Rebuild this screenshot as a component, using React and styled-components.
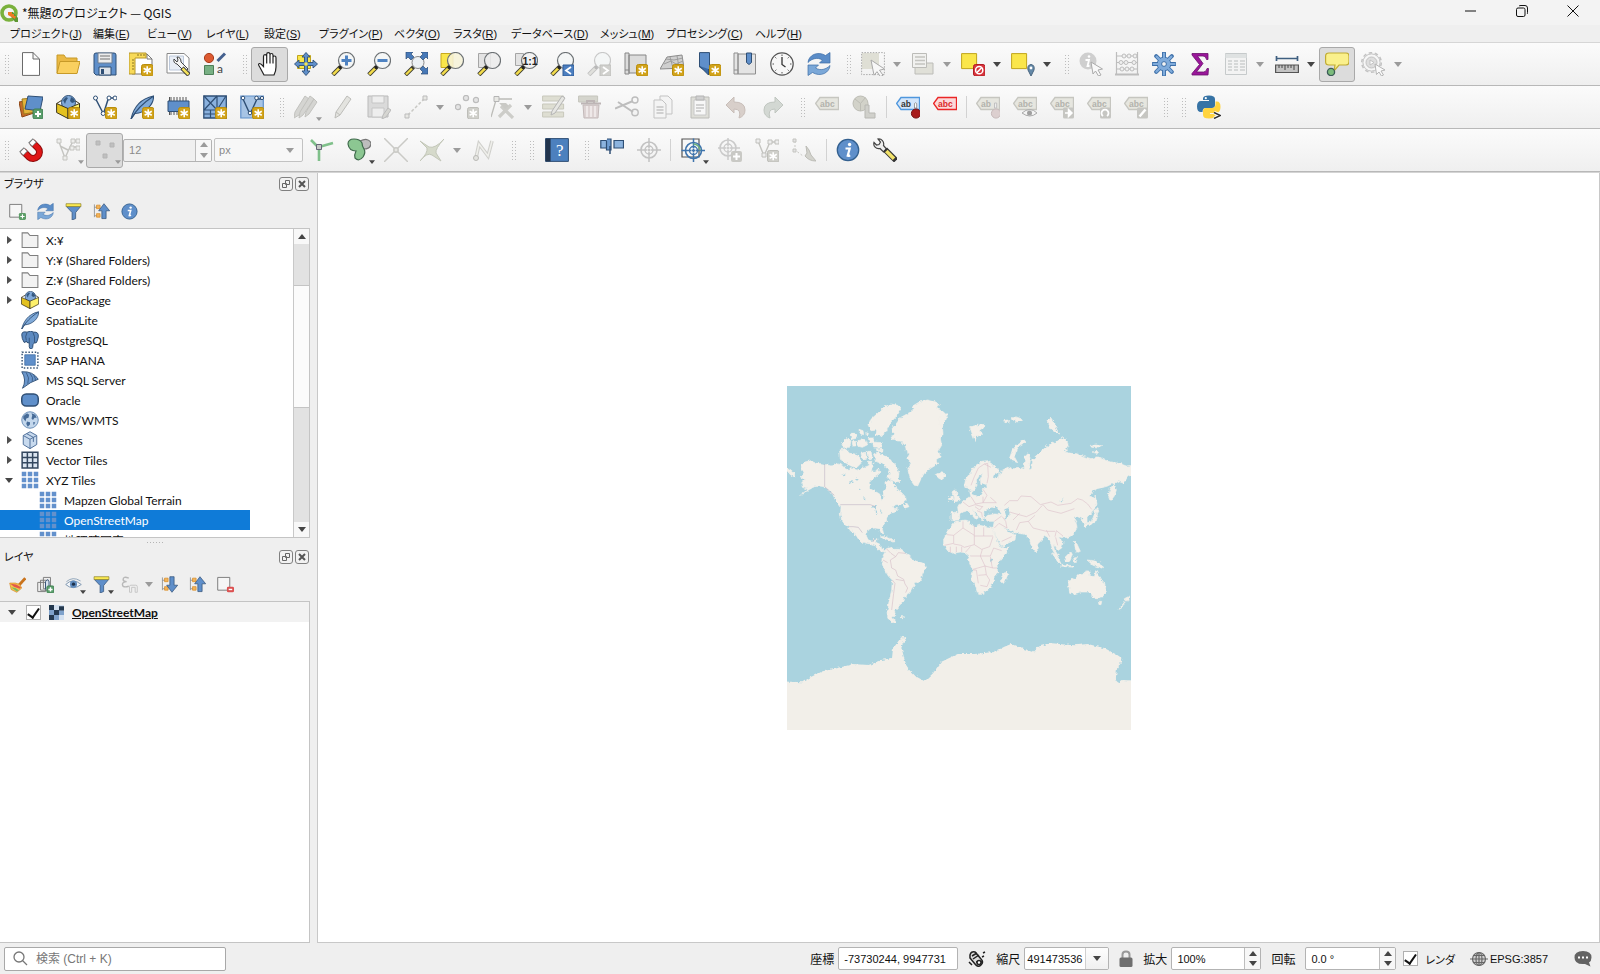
import { useState } from "react";
import styled, { createGlobalStyle } from "styled-components";

const GlobalStyle = createGlobalStyle`
    * {
        box-sizing: border-box;
    }
    body {
        margin: 0;
        overflow: hidden;
        background: #efefef;
        color: #111;
        font-family: Lato, "Noto Sans CJK JP", sans-serif;
        font-size: 12px;
    }
    button, input, select {
        font: inherit;
        color: inherit;
        margin: 0;
    }
`;

/* ---------- shared icon parts ---------- */

const BLUE = "#5f8fca";
const NAVY = "#2f4f75";
const LINE = "#bcbcb8";

const Svg = ({ size = 24, children }) => (
    <svg width={size} height={size} viewBox="0 0 24 24" fill="none" aria-hidden="true">
        {children}
    </svg>
);

const Star = ({ off }) => (
    <g>
        <rect x="12.5" y="12.5" width="11.5" height="11.5" rx="2" fill={off ? "#cfcfca" : "#d2a31a"} stroke={off ? "#bdbdb8" : "#b98d0b"} />
        <path d="M18.2 14.3V22.2M14.6 16.2L21.8 20.3M21.8 16.2L14.6 20.3" stroke="#fff" strokeWidth="1.6" />
    </g>
);

const Plus = () => (
    <g>
        <rect x="14" y="14" width="10" height="10" rx="2" fill="#5a9e6c" stroke="#3f7f50" />
        <path d="M19 16v6M16 19h6" stroke="#fff" strokeWidth="2" />
    </g>
);

const Lens = ({ off, tint = "#f4f6f6" }) => (
    <g>
        <path d="M10 14.5L1.8 22.8" stroke={off ? "#c2c2c2" : "#3c3c30"} strokeWidth="4.4" />
        <path d="M8.4 16.2L2.2 22.4" stroke={off ? "#e0e0dc" : "#f3dc4c"} strokeWidth="2.6" />
        <circle cx="15.5" cy="8.5" r="8" fill={tint} fillOpacity=".88" stroke={off ? "#c8c8c8" : "#6d7275"} strokeWidth="1.2" />
        <circle cx="9" cy="15.4" r="1.6" fill={off ? "#b8b8b8" : "#222"} />
    </g>
);

const Refresh = () => (
    <g stroke="#3d6ea8" strokeWidth=".7">
        <path d="M1 10.500C1.500 3.500 10 -1.500 18.500 3.500L23 .5V11H12.500L15.500 8C10.500 5 5 6.500 1 10.500z" fill="#5b8dc8" />
        <path d="M23 13.500C22.500 20.500 14 25.500 5.500 20.500L1 23.500V13H11.500L8.500 16C13.500 19 19 17.500 23 13.500z" fill="#7ba8d8" />
    </g>
);

const Info = () => (
    <g>
        <circle cx="12" cy="12" r="10.700" fill={BLUE} stroke="#33608f" strokeWidth="1.300" />
        <circle cx="13.600" cy="6.500" r="1.700" fill="#fff" />
        <path d="M9.500 10.500h4.200l-2 7.300q1 .3 2.400-.6" stroke="#fff" strokeWidth="2.200" />
    </g>
);

const Globe = () => (
    <g>
        <circle cx="12" cy="12" r="11" fill="#c3d7ec" stroke="#6b8fb8" strokeWidth="1.300" />
        <path d="M3 7L8 3l3 2-1 4-3 1-1 4-3-4zM14 3l5 2 2 4-3 0-2 3-2-2 1-4zM8 14l4 1 0 3-3 3-2-4zM16 15l3 0-2 4z" fill="#466b98" />
    </g>
);

const GeoBox = () => (
    <g>
        <circle cx="12.500" cy="7.500" r="7" fill="#7fa8d8" stroke={NAVY} />
        <path d="M7 5l3-3 2 1-2 3-1 3zM15 2l3 2 1 3-3 1-2-2z" fill="#35587f" />
        <path d="M.6 8.500L12 13.500V23.500L.6 17.500z" fill="#e3c11f" stroke="#3c3620" />
        <path d="M23.500 8.500L12 13.500V23.500L23.500 17.500z" fill="#fdf06a" stroke="#3c3620" />
        <path d="M.6 8.500L5.500 5.500M23.500 8.500L19.500 6" stroke="#3c3620" />
    </g>
);

const Feather = () => (
    <g>
        <path d="M1 24C3 15 9 4 23.500 1 24 10 15 18 5 18.500z" fill="#7fa9d8" stroke={NAVY} strokeWidth="1.100" />
        <path d="M1 24C6 15 13 8 23 1.500" stroke={NAVY} strokeWidth="1.200" />
    </g>
);

const Funnel = () => (
    <g>
        <path d="M2 5h20l-7 8.500v8.500l-5 2v-10.500z" fill={BLUE} stroke={NAVY} />
        <path d="M1.500 1h21v4h-21z" fill="#fbe94f" stroke="#8d8230" />
    </g>
);

const Tag = ({ fill, stroke, text, label = "abc" }) => (
    <g>
        <path d="M.6 8.500L5 2.500H23.500V14.500H5z" fill={fill} stroke={stroke} strokeWidth="1.300" />
        <text x="5" y="11.500" fontSize="8.500" fontWeight="700" fontFamily="Liberation Sans, sans-serif" fill={text}>{label}</text>
    </g>
);
const GreyTag = ({ label }) => <Tag fill="#e6e6df" stroke="#c6c6c0" text="#b2b2ac" label={label} />;

const Tiles = ({ fill = "#6391cc" }) => (
    <path d="M1 1h6v6H1zM9 1h6v6H9zM17 1h6v6h-6zM1 9h6v6H1zM9 9h6v6H9zM17 9h6v6h-6zM1 17h6v6H1zM9 17h6v6H9zM17 17h6v6h-6z" fill={fill} />
);

const Cross = ({ stroke, center = [12, 12] }) => (
    <g transform={`translate(${center[0]} ${center[1]})`} stroke={stroke}>
        <circle r="8" strokeWidth="1.600" />
        <circle r="4" strokeWidth="1.300" />
        <path d="M-12 0h10M12 0h-10M0-12v10M0 12v-10M-1.500 0h3M0-1.500v3" strokeWidth="1.500" />
    </g>
);

const Wrench = () => (
    <g>
        <path d="M1 4.500C0 8 3 11.500 7 10.500l3.500 3.500 3-3L10.500 7.500C11.500 3.500 8.500.500 5 1l2.500 3L6 6.500 3.500 7z" fill="#eee" stroke="#444" strokeWidth="1.200" />
        <path d="M12 11.500L23 22.500" stroke="#333" strokeWidth="5.600" />
        <path d="M13.300 13L21 20.700" stroke="#f2e26a" strokeWidth="3.600" />
    </g>
);

const UpDown = ({ down }) => (
    <g>
        <path d="M2 2v18M2 6h6M2 18h8" stroke="#8c8c8c" strokeWidth="1.200" />
        <path d="M5 3h5v5H5zM5 15h5v5H5z" fill="#f2b45c" stroke="#d88b22" />
        <path d={down ? "M12.500 1h6v12h5L15.500 23 8 13h4.500z" : "M12.500 22h6V11h5L15.500 1 8 11h4.500z"} fill={BLUE} stroke={NAVY} />
    </g>
);

const icons = {
    newDoc: <path d="M3.500 .6H14L20.500 7V23.400H3.500zM14 .6V7h6.500" fill="#fff" stroke="#6a6a6a" />,
    open: (
        <g stroke="#c79a28">
            <path d="M1 3h7l2 3h11v15H1z" fill="#eab944" />
            <path d="M4 9.500h20l-3 12H1z" fill="#fad05f" />
        </g>
    ),
    save: (
        <g>
            <path d="M1 3Q1 1 3 1H21Q23 1 23 3V23H3L1 21z" fill={BLUE} stroke={NAVY} />
            <path d="M5 1h14v10H5z" fill="#ececec" stroke="#6f7f92" />
            <path d="M7 4h10M7 7h10" stroke="#9a9a9a" strokeWidth="1.300" />
            <path d="M6 15h12v8H6z" fill="#dfe4ea" stroke={NAVY} />
            <path d="M8 17h3v5H8z" fill={NAVY} />
        </g>
    ),
    layout: (
        <g>
            <path d="M3 2H18L23 7V22H3z" fill="#fff" stroke="#777" />
            <path d="M18 2V7h5" stroke="#777" />
            <path d="M0 1H17V6H6V22H0z" fill="#f8da58" stroke="#b6962a" />
            <path d="M3 8h2M3 11h2M3 14h2M3 17h2M9 2v2M12 2v2M15 2v2" stroke="#8b7420" />
            <Star />
        </g>
    ),
    layoutManager: (
        <g>
            <path d="M1 1.500H18L23 6V21H1z" fill="#fff" stroke="#888" />
            <path d="M3.500 4h14v14h-14z" fill="#e9eef6" stroke="#bcc8da" />
            <path d="M8 7q-1 4 3 5l8 8 3-3-7-7q0-5-4-5l1 3-1 2z" fill="#f5f5f5" stroke="#444" />
            <path d="M16 16l7 7" stroke="#333" strokeWidth="4.500" />
            <path d="M16.500 16.500l6 6" stroke="#f2e05c" strokeWidth="2.500" />
        </g>
    ),
    style: (
        <g>
            <circle cx="6" cy="6" r="4.600" fill="#dd5a31" stroke="#a83c1b" />
            <path d="M14.500 9L22 1.500" stroke="#45618f" strokeWidth="3" />
            <path d="M1.500 13.500h9v9h-9z" fill="#78b084" stroke="#4d7f58" />
            <text x="14" y="21" fontSize="12" fontFamily="Lato, sans-serif" fill="#444">a</text>
        </g>
    ),
    pan: <path d="M7 23L3 15.500Q.5 12 2.300 11.500 3.500 11.200 6.500 14.500V4.500Q6.500 2.600 8 2.600T9.700 4.300V10 2.200Q9.700.6 11.300.6T13 2.200V10 3Q13 1.500 14.500 1.500T16 3.200V10.500 5.500Q16 4 17.500 4T19 5.800V15Q19 19 17 23zM9.700 9.500v2M13 9.500v2M16 9.500v2" fill="#fff" stroke="#222" strokeWidth="1.200" />,
    panSel: (
        <g>
            <path d="M3.500 3.500h13v13h-13z" fill="#fae64a" stroke="#c0a51c" />
            <path d="M12 .5L16 5h-2.500v5.500H19V8l4.500 4L19 16v-2.500h-5.500V19H16l-4 4.500L8 19h2.500v-5.500H5V16L.5 12 5 8v2.500h5.500V5H8z" fill={BLUE} stroke={NAVY} strokeWidth=".9" />
            <path d="M10.500 10.500h3v3h-3z" fill="#fae64a" />
        </g>
    ),
    zoomIn: <g><Lens /><path d="M15.500 3.500v10M10.500 8.500h10" stroke="#4f83c2" strokeWidth="3" /></g>,
    zoomOut: <g><Lens /><path d="M10.500 8.500h10" stroke="#4f83c2" strokeWidth="3" /></g>,
    zoomFull: (
        <g>
            <circle cx="14" cy="10.500" r="6" fill="#edf1f4" stroke="#888" />
            <path d="M9.500 15L1.500 23" stroke="#3c3c30" strokeWidth="4" />
            <path d="M8 16.500L2 22.500" stroke="#f3dc4c" strokeWidth="2.300" />
            <path d="M2 0h7L7 2l3 3-3 3-3-3-2 2zM24 0h-7l2 2-3 3 3 3 3-3 2 2zM24 22h-7l2-2-3-3 3-3 3 3 2-2z" fill="#4779b8" stroke={NAVY} strokeWidth=".7" />
        </g>
    ),
    zoomSel: <g><path d="M1 1.500h12v14H1z" fill="#fae64a" stroke="#c7a81e" /><Lens tint="#f6f2d8" /></g>,
    zoomLayer: <g><path d="M1.500 1.500h12v14h-12z" fill="#e3e3e3" stroke="#a5a5a5" /><Lens tint="#ececec" /></g>,
    zoomNative: (
        <g>
            <path d="M1.500 1.500h8v12h-8z" fill="#e3e3e3" stroke="#a5a5a5" />
            <Lens tint="#f1f1f1" />
            <text x="8.500" y="12.500" fontSize="10.500" fontWeight="700" fontFamily="Liberation Sans, sans-serif" fill="#222">1:1</text>
        </g>
    ),
    zoomLast: (
        <g>
            <Lens />
            <path d="M13 13h11v11H13z" fill="#4c7fc0" stroke="#2e5c96" />
            <path d="M21 15l-5 3.500 5 3.500" stroke="#fff" strokeWidth="1.800" />
        </g>
    ),
    zoomNext: (
        <g>
            <Lens off />
            <path d="M13 13h11v11H13z" fill="#d0d0cd" stroke="#c0c0bd" />
            <path d="M16 15l5 3.500-5 3.500" stroke="#fff" strokeWidth="1.800" />
        </g>
    ),
    newMap: (
        <g>
            <path d="M1 1h4v21H1zM5 3h17v18H5z" fill="#dcdcdc" stroke="#868686" />
            <path d="M1 18h4" stroke="#868686" />
            <Star />
        </g>
    ),
    new3d: (
        <g>
            <path d="M7 5L22 3 24 16 0 17z" fill="#cfcfcf" stroke="#8b8b8b" />
            <path d="M4 12l7-3 5 3 7-3M10 5l3 11M17 4l2 11M6 7l8 1 9-2" stroke="#999" strokeWidth=".9" />
            <Star />
        </g>
    ),
    bookmark: (
        <g>
            <path d="M2.500 .6h10v20.500L2.500 15z" fill={BLUE} stroke={NAVY} />
            <path d="M2.500 14l9 9v-6" fill="#3b6ba5" stroke={NAVY} />
            <Star />
        </g>
    ),
    bookmarks: (
        <g>
            <path d="M1 1h4v21H1zM5 2h17.500v20H5z" fill="#e4e4e4" stroke="#8e8e8e" />
            <path d="M1 18h4" stroke="#8e8e8e" />
            <path d="M13.500 1h5v9.500l-2.500 2-2.500-2z" fill={BLUE} stroke={NAVY} />
        </g>
    ),
    clock: (
        <g>
            <circle cx="12" cy="12" r="11.200" fill="#f7f7f7" stroke="#555" strokeWidth="1.200" />
            <path d="M12 5v7.500l3.500 2.500" stroke="#333" strokeWidth="1.300" />
            <path d="M12 2.500v1.500M12 20v1.500M2.500 12H4M20 12h1.500M5.300 5.300l1 1M17.700 17.700l1 1M18.700 5.300l-1 1M5.300 18.700l1-1" stroke="#555" />
        </g>
    ),
    refresh: <Refresh />,
    select: (
        <g>
            <path d="M1 1h17v16H1z" fill="#dfdfd5" />
            <path d="M.6 .6h22.800v22H.6z" stroke="#aaa" strokeDasharray="1.500 1.300" />
            <path d="M10 8l13.500 9-5 1.200 3.500 5-2.500 1.500-3.500-5-3 3.500z" fill="#f7f7f7" stroke="#a9a9a9" />
        </g>
    ),
    selectForm: (
        <g>
            <path d="M4 11h18v11H4z" fill="#e0e0d8" stroke={LINE} />
            <path d="M1.500 1.500h14v14h-14z" fill="#f1f1ef" stroke={LINE} />
            <path d="M4 5h10M4 8.500h10M4 12h10" stroke="#c4c4c0" strokeWidth="1.500" />
        </g>
    ),
    deselect: (
        <g>
            <path d="M.6 1.600h15v15h-15z" fill="#fae64a" stroke="#c0a51c" />
            <rect x="12.500" y="12.500" width="11.500" height="11.500" rx="2" fill="#d9343c" stroke="#b01d25" />
            <circle cx="18.200" cy="18.200" r="3.600" stroke="#fff" strokeWidth="1.500" />
            <path d="M15.800 20.600l4.800-4.800" stroke="#fff" strokeWidth="1.500" />
        </g>
    ),
    selectPin: (
        <g>
            <path d="M.6 1.600h15v15h-15z" fill="#fae64a" stroke="#c0a51c" />
            <path d="M20 24l-3-6q-1-5 3-5.500 4 .5 3 5.500z" fill="#6489a8" stroke="#48657f" />
            <circle cx="20" cy="16" r="1.400" fill="#fff" />
        </g>
    ),
    identify: (
        <g>
            <circle cx="9" cy="9" r="8.500" fill="#cfcfcf" />
            <circle cx="10" cy="4.500" r="1.300" fill="#fff" />
            <path d="M6.500 8h3.500L8.500 14h2" stroke="#fff" strokeWidth="1.800" />
            <path d="M12 10l11.500 7-4.500 1 3 5-2.500 1-3-5-2.500 3z" fill="#f9f9f9" stroke="#aaa" />
        </g>
    ),
    abacus: (
        <g stroke="#bdbdbd">
            <path d="M1.500 0v22M22.500 0v22M1 4h22M1 10.500h22M1 17h22" strokeWidth="1.200" />
            <path d="M0 22.500h24" strokeWidth="2" />
            <g fill="#f0f0f0">
                <circle cx="9" cy="4" r="2" /><circle cx="14" cy="4" r="2" /><circle cx="20" cy="4" r="2" />
                <circle cx="6" cy="10.500" r="2" /><circle cx="11" cy="10.500" r="2" /><circle cx="19" cy="10.500" r="2" />
                <circle cx="7" cy="17" r="2" /><circle cx="12" cy="17" r="2" /><circle cx="17" cy="17" r="2" />
            </g>
        </g>
    ),
    gear: (
        <g>
            <path d="M12 1v22M1 12h22M4.200 4.200l15.600 15.600M19.800 4.200L4.200 19.800" stroke="#3d6fa8" strokeWidth="4" strokeLinecap="round" />
            <circle cx="12" cy="12" r="6.800" fill="#7fabdb" stroke="#3d6fa8" />
            <path d="M12 1.600v21M1.600 12h21M4.600 4.600l15 15M19.400 4.600l-15 15" stroke="#7fabdb" strokeWidth="2.200" strokeLinecap="round" />
            <circle cx="12" cy="12" r="2.400" fill="#f3f3f3" stroke="#3d6fa8" />
        </g>
    ),
    sigma: <path d="M4 1.500H20V7.500H18.500Q18 4 15 4H9.500L15 11.500 8.500 20H15.500Q18.500 20 19 16.500H20.500L20 23H4V21.500L11.500 12.500 4 3z" fill="#9a179a" stroke="#6a0f6c" strokeWidth=".8" />,
    table: (
        <g>
            <path d="M1.500 1.500h21v21h-21z" fill="#f3f3f3" stroke="#c6cacb" />
            <path d="M1.500 2h21v4h-21z" fill="#dfe2e2" />
            <path d="M4 9h4M10 9h4M16 9h5M4 12h4M10 12h4M16 12h5M4 15h4M10 15h4M16 15h5M4 18h4M10 18h4M16 18h5" stroke="#cdd0d0" strokeWidth="1.300" />
        </g>
    ),
    measure: (
        <g>
            <path d="M1.500 6.500h21M1.500 4v5M22.500 4v5" stroke="#3f5f80" strokeWidth="1.700" />
            <path d="M.6 13h22.800v7.500H.6z" fill="#c3c3c3" stroke="#555" strokeWidth="1.200" />
            <path d="M4 13v3M7 13v3M10 13v5M13 13v3M16 13v3M19 13v5" stroke="#444" />
        </g>
    ),
    mapTip: (
        <g>
            <path d="M4 1H21Q24 1 24 4V10Q24 13 21 13H14L9 19 10 13H4Q.6 13 .6 10V4Q.6 1 4 1z" fill="#faf08c" stroke="#c0ab33" strokeWidth="1.200" />
            <circle cx="6" cy="20" r="3.600" fill="#7cbc7c" stroke="#3c5c58" strokeWidth="1.300" />
        </g>
    ),
    runAction: (
        <g stroke="#c2c2c2">
            <circle cx="10.500" cy="10.500" r="9.800" strokeDasharray="3.500 2.650" strokeWidth="1.500" />
            <circle cx="10.500" cy="10.500" r="8.600" fill="#f6f6f6" />
            <circle cx="10.500" cy="10.500" r="5.500" fill="#dedede" />
            <path d="M9 8l4 2.500L9 13z" fill="#fff" />
            <path d="M14 12l10 6-4 1 2.500 4-2 1-2.500-4-2.500 2.500z" fill="#fafafa" stroke="#b5b5b5" />
        </g>
    ),

    dataSource: (
        <g>
            <path d="M0 7L12 5 15 18 3 22z" fill="#c56a28" stroke="#8e4715" />
            <path d="M3 4L15 3 17 17 5 19z" fill="#e5b43a" stroke="#9d7a1d" />
            <path d="M9 1L24 2 21 16 6 14z" fill={BLUE} stroke={NAVY} />
            <Plus />
        </g>
    ),
    newGeo: <g><GeoBox /><Star /></g>,
    newShape: (
        <g>
            <path d="M3 4.500L9.500 17M11 17L15.500 3M16 3h6" stroke={NAVY} strokeWidth="1.500" />
            <g fill="#fff" stroke={NAVY}>
                <circle cx="2.500" cy="3" r="2" /><circle cx="16" cy="3" r="2" /><circle cx="22" cy="3" r="2" /><circle cx="10.200" cy="18.500" r="2" />
            </g>
            <Star />
        </g>
    ),
    newSpatialite: <g><Feather /><Star /></g>,
    newMemory: (
        <g>
            <path d="M5 2v4M8 2v4M11 2v4M14 2v4M17 2v4M20 2v4M5 16v4M8 16v4M11 16v4M3.500 2v4M3.500 16v4" stroke="#555" />
            <path d="M2 6h21v10.500H2z" fill={BLUE} stroke={NAVY} />
            <Star />
        </g>
    ),
    newMesh: (
        <g>
            <path d="M.8 1h22.500v22H.8z" fill="#8ab1de" stroke={NAVY} strokeWidth="1.300" />
            <path d="M1 1l13 14M14 1L1 15M14 1v22M1 15h22M23 1L14 15M7.500 15v8M1 19h13" stroke={NAVY} strokeWidth="1.200" />
            <Star />
        </g>
    ),
    newVirtual: (
        <g>
            <path d="M.8 1h22.500v22H.8z" fill="#a7c4e5" stroke={BLUE} strokeWidth="1.200" />
            <path d="M3 4l6 13h2L17 4h5" stroke={NAVY} strokeWidth="1.400" />
            <g fill="#fff" stroke={NAVY}><circle cx="3" cy="3" r="1.800" /><circle cx="16.500" cy="3" r="1.800" /><circle cx="22" cy="3" r="1.600" /><circle cx="10" cy="18" r="1.800" /></g>
            <Star />
        </g>
    ),
    multiEdit: (
        <g fill="#d5d5d2" stroke="#c2c2be">
            <path d="M0 23l1-6L11 1l4 3L5 20z" /><path d="M5 23l1-6L16 1l4 3L9 20z" /><path d="M11 22l1-5L20 4l3 3-8 12z" />
        </g>
    ),
    pencil: <path d="M4 23l1-6L16 1l4 3L9 20zM5 17l4 3" fill="#e3e3df" stroke="#bdbdb9" />,
    saveEdit: (
        <g>
            <path d="M1 1h20v21H1z" fill="#dadada" stroke="#bababa" /><path d="M5 1h12v7H5zM5 13h12v9H5z" fill="#eee" stroke="#c6c6c6" />
            <path d="M15 24l1-4 5-7 3 2-5 7z" fill="#d6d6d2" stroke="#bbb" />
        </g>
    ),
    addLine: (
        <g>
            <path d="M4 20L20 4" stroke="#c8c8c4" strokeWidth="1.500" strokeDasharray="3 2" />
            <path d="M1 19h4v4H1zM19 1h4v4h-4z" fill="#e8e8e4" stroke="#bbb" />
        </g>
    ),
    addPoints: (
        <g>
            <g fill="#e4e4e4" stroke="#bcbcbc" strokeWidth="1.200"><circle cx="11" cy="3" r="2.600" /><circle cx="21" cy="5" r="2.600" /><circle cx="3" cy="12" r="2.600" /></g>
            <Star off />
        </g>
    ),
    vertexTool: (
        <g>
            <path d="M5 5L0 22M7 4h14" stroke="#bcbcb8" strokeWidth="1.300" /><path d="M3 1.500h5v5H3z" fill="#e8e8e4" stroke="#b5b5b5" />
            <path d="M10 11l12 12M20 10L8 22" stroke="#cdcdc9" strokeWidth="3.200" /><path d="M8 8h7l3 3-4 3z" fill="#c9c9c5" />
        </g>
    ),
    attributes: (
        <g>
            <path d="M.6 1h21v5h-21zM.6 9h21v5h-21zM.6 17h21v5h-21z" fill="#deded2" stroke="#c8c8bc" />
            <path d="M9 20l1-4L20 1l3 2L13 18z" fill="#e6e6e2" stroke="#b5b5b5" />
        </g>
    ),
    trash: (
        <g>
            <path d="M.6 1h19v6h-19z" fill="#d5d5cd" stroke="#c5c5bd" /><path d="M3 8.500h20M9 8V6h7v2" stroke="#bdb5b5" strokeWidth="2" />
            <path d="M5 10h16l-1 13H6z" fill="#ddd3d3" stroke="#c3b9b9" /><path d="M9 11v11M13 11v11M17 11v11" stroke="#f4f0f0" strokeWidth="1.500" />
        </g>
    ),
    cut: (
        <g stroke="#bdbdbd">
            <path d="M0 13.500L18 6M3 7l15 10" strokeWidth="2" /><circle cx="20" cy="5" r="3" strokeWidth="1.400" /><circle cx="20" cy="17.500" r="3.200" strokeWidth="1.400" />
        </g>
    ),
    copy: (
        <g fill="#f4f4f4" stroke="#c3c3c3">
            <path d="M9 1h8l4 4v14H9z" /><path d="M3 5h8l4 4v14H3z" /><path d="M5.500 12h7M5.500 15h7M5.500 18h7" strokeWidth="1.500" />
        </g>
    ),
    paste: (
        <g>
            <path d="M3 2h18v21H3z" fill="#deded8" stroke="#bcbcb8" /><path d="M6 5h12v15H6z" fill="#f7f7f7" stroke="#c8c8c8" />
            <path d="M8 1h8v4H8z" fill="#d0d0d0" stroke="#b4b4b4" /><path d="M8 10h8M8 13h8M8 16h5" stroke="#c6c6c6" strokeWidth="1.300" />
        </g>
    ),
    undo: <path d="M2 10L10 2v5q11 0 11 8 0 6-6 8 3-9-5-9v4z" fill="#d8cfca" stroke="#c8beb9" />,
    redo: <path d="M22 10L14 2v5Q3 7 3 15q0 6 6 8-3-9 5-9v4z" fill="#d3d8d3" stroke="#c0c6c0" />,
    label: <GreyTag />,
    diagram: (
        <g>
            <circle cx="8.500" cy="8.500" r="7.500" fill="#d2d2c9" stroke="#bdbdb5" /><path d="M8.500 8.500l5-6M8.500 8.500L3 4M8.500 8.500V16" stroke="#bdbdb5" />
            <path d="M13 23V10h4v4h0v4h6v5z" fill="#d0d0cb" stroke="#b8b8b3" />
        </g>
    ),
    pinLabel: (
        <g>
            <Tag fill="#d4e6fa" stroke="#4f97dd" text="#333" label="ab" />
            <circle cx="20" cy="18.500" r="4.600" fill="#a81c1c" stroke="#731010" /><path d="M18.500 13V8.500q1-1.500 2.200 0v4.500z" fill="#fff" stroke="#777" strokeWidth=".7" />
        </g>
    ),
    redLabel: <Tag fill="#fbd9d9" stroke="#ea2626" text="#dc2a2a" />,
    pinOff: <g><GreyTag label="ab" /><circle cx="20" cy="18.500" r="4.600" fill="#dccfcf" stroke="#c6b9b9" /><path d="M18.500 13V8h2.200v5z" fill="#eee" stroke="#c0c0c0" /></g>,
    showLabel: <g><GreyTag /><path d="M9 18q8-7 15 0-7 6-15 0z" fill="#f4f4f4" stroke="#aaa" /><circle cx="16.500" cy="18" r="2.500" fill="#a0a0a0" /></g>,
    moveLabel: <g><GreyTag /><rect x="13" y="12.500" width="11" height="11" rx="1.500" fill="#c6c6c2" /><path d="M15 18h4M18.500 14.500l3.500 3.500-3.500 3.500z" stroke="#fff" strokeWidth="1.500" fill="#fff" /></g>,
    rotateLabel: <g><GreyTag /><rect x="13" y="12.500" width="11" height="11" rx="1.500" fill="#c6c6c2" /><path d="M16 21a3.500 3.500 0 1 1 4 0" stroke="#fff" strokeWidth="1.800" /></g>,
    editLabel: <g><GreyTag /><rect x="13" y="12.500" width="11" height="11" rx="1.500" fill="#c6c6c2" /><path d="M15.500 21.500l6-7" stroke="#fff" strokeWidth="2.500" /></g>,
    python: (
        <g>
            <path d="M12 .5q6 0 6 3.500v6q0 3-3 3H9q-3.500 0-3.500 4H4q-4 0-4-5.500T4 6h8V5H6V3.500Q6 .5 12 .5z" fill="#3673a5" /><circle cx="8.800" cy="3.200" r="1.100" fill="#fff" />
            <path d="M12 23.500q-6 0-6-3.500v-4q0-3 3-3h6q3.500 0 3.500-4V6.500H20q3.500 0 3.500 5.500 0 5-3.500 6h-7v1h5.500v1.500q0 3-6.500 3z" fill="#ffd43f" />
            <path d="M17 17.500l6.500 3-6.500 3" stroke="#fff" strokeWidth="3.500" /><path d="M17 17.500l6.500 3-6.500 3" stroke="#333" strokeWidth="1.500" />
        </g>
    ),

    magnet: (
        <g>
            <path d="M12 3L18 9A6.400 6.400 0 0 1 9 18L3 12" stroke="#8f0d0d" strokeWidth="7" transform="translate(1 1)" />
            <path d="M13 4L19 10A6.400 6.400 0 0 1 10 19L4 13" stroke="#df1616" strokeWidth="5" />
            <path d="M11.500 2.500L15.500 6.500M2.500 11.500L6.500 15.500" stroke="#777" strokeWidth="6.600" />
            <path d="M12.300 3.300L15 6M3.300 12.300L6 15" stroke="#fff" strokeWidth="4.800" />
        </g>
    ),
    snapAll: (
        <g stroke="#c4c4c0" fill="#ededeb"><path d="M3 4l6 16L14 9M14 9L17 3h6M14 9h8M4 8l8 4" strokeWidth="1.400" fill="none" /><path d="M1 1h4v4H1zM15 1h4v4h-4zM20 1h4v4h-4zM14 8h4v4h-4zM20 8h4v4h-4zM7 18h4v4H7z" /></g>
    ),
    snapPoints: <path d="M3 3h4v4H3zM17 5h4v4h-4zM10 16h4v4h-4z" fill="#bfbfbf" stroke="#b4b4b4" />,
    topology: (
        <g>
            <path d="M1 2l7 7M9 23V9L23 5" stroke="#7fc08a" strokeWidth="2.600" /><path d="M6.500 6.500h5v5h-5z" fill="#c4c8c4" stroke="#667" />
        </g>
    ),
    avoid: (
        <g strokeWidth="1.200">
            <path d="M13 3q8-4 11 2 0 6-7 6l-5-3z" fill="#bdbdbd" stroke="#777" />
            <path d="M1 6Q1 1 7 1t8 4q0 3 2 6t-1 8q-4 5-8 1-1-3 1-7-7 0-8-7z" fill="#8cc792" stroke="#3f6a4c" />
        </g>
    ),
    snapCross: <g stroke="#cacac6" strokeWidth="1.500"><path d="M0 0l24 24M24 0L0 24" /><circle cx="12" cy="12" r="2.200" fill="#e6e6e2" /></g>,
    tracing: <path d="M0 3l9 6q6 2 15-8-9 10-8 14l5 8-9-6Q7 14 0 23q8-8 7-13z" fill="#d6dacb" stroke="#c3c7b9" />,
    digitize: (
        <g><path d="M4 20L7 6l9 12L20 3" stroke="#cfcfcb" strokeWidth="3.600" /><path d="M4 20L7 6l9 12L20 3" stroke="#efefeb" strokeWidth="1.500" /><circle cx="4" cy="20" r="2.500" fill="#e4e4e0" stroke="#b9b9b5" /></g>
    ),
    help: (
        <g>
            <path d="M.6 .6h22.800v22.800H.6z" fill="#4c80be" stroke={NAVY} /><path d="M.6 .6h5v22.800h-5z" fill="#22344d" />
            <text x="11" y="18" fontSize="17" fontFamily="Liberation Serif, serif" fill="#fff">?</text>
        </g>
    ),
    copyright: (
        <g>
            <path d="M.8 2.500h7.500v7.500H.8zM14 2.500h9.500v7.500H14z" fill="#8db4df" stroke={NAVY} strokeWidth="1.200" />
            <path d="M7 1h4v11H6.500V3" fill="#6f9dd2" stroke={NAVY} strokeWidth="1.200" /><path d="M10 8v8" stroke={NAVY} strokeWidth="1.500" />
        </g>
    ),
    target: <Cross stroke="#c2c2c2" />,
    targetMap: (
        <g><path d="M1 1h17v18H1z" fill="#f7f7f7" stroke="#555" strokeWidth="1.200" /><Cross stroke="#3f74ad" center={[12.5, 12.5]} /><path d="M12.500 6A6.500 6.500 0 0 1 19 12.500" stroke="#6fb27d" strokeWidth="1.400" /></g>
    ),
    targetAdd: <g><Cross stroke="#cacaca" center={[10, 10]} /><rect x="13" y="13" width="11" height="11" rx="2" fill="#c9c9c5" /><path d="M18.500 15v7M15 18.500h7" stroke="#fff" strokeWidth="2" /></g>,
    vertexAdd: (
        <g><path d="M3 3l6 15L15 4h8" stroke="#c4c4c0" strokeWidth="1.400" /><path d="M1 1h4v4H1zM13 2h4v4h-4zM20 2h4v4h-4zM7 15h4v4H7z" fill="#eee" stroke="#c0c0bc" /><Star off /></g>
    ),
    brushSel: (
        <g><path d="M3 3v9l8 6" stroke="#c9c9c5" strokeDasharray="2 2" /><path d="M1 1h3v3H1zM1 11h3v3H1z" fill="#e3e3e3" stroke="#c4c4c0" /><path d="M14 8l3 4 2 5 5 6q-7 0-11-5l2-3z" fill="#d2d2cc" stroke="#bcbcb6" /></g>
    ),
    info: <Info />,
    wrench: <Wrench />,

    addLayer: <g><path d="M1 2h17v18H1z" fill="#f6f6f6" stroke="#777" strokeWidth="1.300" /><rect x="14" y="14" width="10" height="10" rx="2" fill="#5d9e68" /><path d="M19 16v6M16 19h6" stroke="#fff" strokeWidth="1.600" /></g>,
    refreshSmall: <Refresh />,
    funnel: <Funnel />,
    collapse: <UpDown />,
    expand: <UpDown down />,
    brush: (
        <g><path d="M23 3L14 13" stroke="#c9731c" strokeWidth="4" /><path d="M1 10l8 0 6 2 3 5-7 6L3 19z" fill="#f6c64a" stroke="#d9892b" /><path d="M2 11l8 1 7 4-2 2-8-3z" fill="#e2574b" /><path d="M3 16l6 1 5 3-3 2z" fill="#7ab864" /></g>
    ),
    addGroup: <g fill="#eee" stroke="#777" strokeWidth="1.300"><path d="M1 9h11v13H1zM5 6h11v14H5zM9 2h10v16H9z" /><path d="M12 19V8l3-3 2 3v11" fill="#d8e2ee" stroke={NAVY} /><Plus /></g>,
    eye: <g><path d="M1 12Q11 2 23 12 11 21 1 12z" fill="#f4f7fa" stroke="#7892ad" strokeWidth="1.300" /><circle cx="12" cy="11.500" r="5" fill="#5e8abd" /><circle cx="12" cy="11.500" r="2.300" fill="#1d3049" /><path d="M2 8Q11 0 22 7" stroke="#8ba2b8" strokeWidth="1.300" /></g>,
    expression: <g><path d="M11 3Q3 0 3 5 3 8 8 8 2 8.500 2 12 2 17 11 14.500" stroke="#b8b8b8" strokeWidth="2" /><path d="M12 23v-8q0-2 2-2h7q2 0 2 2v8h-3v-7h-5v7z" fill="#f0f0f0" stroke="#c4c4c4" strokeWidth="1.300" /></g>,
    removeLayer: <g><path d="M1 2h17v18H1z" fill="#f6f6f6" stroke="#777" strokeWidth="1.300" /><rect x="14" y="15" width="10" height="8" rx="2" fill="#dc5050" /><path d="M16.500 19h5" stroke="#fff" strokeWidth="2" /></g>,

    folder: <path d="M1.500 2.500H9l3 3.500h10.500v16h-21z" fill="#f2f2f2" stroke="#7e7e7e" strokeWidth="1.400" />,
    geopackage: <GeoBox />,
    feather: <Feather />,
    elephant: (
        <g><path d="M1 5Q1 0 8 1.500 13-1 17 1.500 24 1 23 8 22 14 20 16q-2 0-2-2 0 3-2 4 0 5-2 6-3 0-3-3v-5q-4 0-4-3-1 3-3 2Q1 10 1 5z" fill="#5d8ac0" stroke={NAVY} strokeWidth="1.300" /><path d="M8 2q-3 6-1 10M16 2q3 5 2 12M11 16V9" stroke={NAVY} strokeWidth="1.100" /></g>
    ),
    hana: <g><path d="M5 5h14v14H5z" fill={BLUE} stroke="#3f6ca3" /><path d="M1.500 1.500h21v21h-21z" stroke="#3b5878" strokeWidth="2" strokeDasharray="2 2.200" /></g>,
    mssql: <g><path d="M1 1q15-1 22 10Q13 14 2 23 8 12 1 1z" fill="#6b97cc" stroke={NAVY} strokeWidth="1.200" /><path d="M7 2q5 7 2 15M12 3q5 6 3 11M17 6q3 4 2 7" stroke={NAVY} /></g>,
    oracle: <rect x="1" y="4" width="22" height="16" rx="6" fill={BLUE} stroke={NAVY} strokeWidth="2" />,
    globe: <Globe />,
    cube: <g fill="#c8daee" stroke="#50709a" strokeWidth="1.300"><path d="M12 1l9 5v12l-9 5.500L3 18V6z" /><path d="M3 6l9 5 9-5M12 11v12.500M7.500 3.500L16.500 8.500v6" /></g>,
    vectorTiles: <g><path d="M1.500 1.500h21v21h-21z" fill="#dce6f1" /><path d="M1.500 1.500h21v21h-21zM8.500 1v22M15.500 1v22M1 8.500h22M1 15.500h22" stroke="#33475e" strokeWidth="2" /></g>,
    tiles: <Tiles />,
    raster: (
        <g><path d="M0 0h24v24H0z" fill="#d4e1f0" /><path d="M0 0h8v8H0zM16 2h8v7h-8zM8 8h8v8H8zM0 16h8v8H0z" fill="#24394f" /><path d="M16 9h8v7h-8zM0 8h8v8H0zM8 16h8v8H8z" fill="#7fa2cb" /></g>
    ),
};

/* ---------- title bar and menu ---------- */

const menus = [
    ["プロジェクト", "J", 83], ["編集", "E", 54], ["ビュー", "V", 59], ["レイヤ", "L", 58],
    ["設定", "S", 55], ["プラグイン", "P", 75], ["ベクタ", "O", 59], ["ラスタ", "R", 58],
    ["データベース", "D", 89], ["メッシュ", "M", 66], ["プロセシング", "C", 89], ["ヘルプ", "H", 60],
];

const TitleBar = () => (
    <STitleBar>
        <svg width="18" height="18" viewBox="0 0 18 18" aria-hidden="true">
            <circle cx="9" cy="9" r="7" fill="none" stroke="#7ab13c" strokeWidth="3.600" />
            <path d="M8 8h5l5 6v4h-3z" fill="#5d9632" />
            <path d="M8 8h4v2h2v2h2l-1 3-7-4z" fill="#ee7b23" />
        </svg>
        <STitle>*無題のプロジェクト — QGIS</STitle>
        <SWindowButton aria-label="最小化">
            <svg width="12" height="12"><path d="M0 6h11" stroke="#111" /></svg>
        </SWindowButton>
        <SWindowButton aria-label="元に戻す">
            <svg width="12" height="12" fill="none" stroke="#111"><rect x=".5" y="3" width="8.500" height="8.500" rx="1.500" /><path d="M3 1Q3.500.5 5 .5H9Q11.500.5 11.500 3V7.500Q11.500 9 11 9" /></svg>
        </SWindowButton>
        <SWindowButton aria-label="閉じる">
            <svg width="12" height="12"><path d="M.5.5l11 11M11.500.5l-11 11" stroke="#111" /></svg>
        </SWindowButton>
    </STitleBar>
);

/* ---------- toolbars ---------- */

const Arrow = ({ up, off, small }) => (
    <svg width={small ? 6 : 8} height={small ? 4 : 5} viewBox="0 0 8 5" aria-hidden="true">
        <path d={up ? "M0 5L4 0l4 5z" : "M0 0h8L4 5z"} fill={off ? "#9b9b9b" : "#454545"} />
    </svg>
);

const Tool = ({ name, menu, corner, pressed, off }) => (
    <>
        <SToolButton aria-label={name} disabled={off} $pressed={pressed}>
            <Svg>{icons[name]}</Svg>
            {corner && <SCorner><Arrow small off={off} /></SCorner>}
        </SToolButton>
        {menu && <SMenuArrow aria-label={`${name} menu`}><Arrow off={off} /></SMenuArrow>}
    </>
);

const ToolBar = ({ width, children }) => (
    <SToolBar>
        <SHandle><SDots /></SHandle>
        <STools $width={width}>{children}</STools>
    </SToolBar>
);

const tool = (name, rest) => <Tool key={name} name={name} {...rest} />;
const off = { off: true };

const Spin = ({ id, label, value, grey, width }) => (
    <SField $width={width} $grey={grey}>
        <input id={id} aria-label={label} defaultValue={value} />
        <SSpinButtons>
            <button aria-label="増やす"><Arrow up off={grey} /></button>
            <button aria-label="減らす"><Arrow off={grey} /></button>
        </SSpinButtons>
    </SField>
);

const ToolRows = () => (
    <>
        <SToolRow>
            <ToolBar width={220}>
                {["newDoc", "open", "save", "layout", "layoutManager", "style"].map((n) => tool(n))}
            </ToolBar>
            <ToolBar width={586}>
                {tool("pan", { pressed: true })}
                {["panSel", "zoomIn", "zoomOut", "zoomFull", "zoomSel", "zoomLayer", "zoomNative", "zoomLast"].map((n) => tool(n))}
                {tool("zoomNext", off)}
                {["newMap", "new3d", "bookmark", "bookmarks", "clock", "refresh"].map((n) => tool(n))}
            </ToolBar>
            <ToolBar width={200}>
                {tool("select", { menu: true, off: true })}
                {tool("selectForm", { menu: true, off: true })}
                {tool("deselect", { menu: true })}
                {tool("selectPin", { menu: true })}
            </ToolBar>
            <ToolBar width={333}>
                {tool("identify", off)}
                {tool("abacus", off)}
                {tool("gear")}
                {tool("sigma")}
                {tool("table", { menu: true, off: true })}
                {tool("measure", { menu: true })}
                {tool("mapTip", { pressed: true })}
                {tool("runAction", { menu: true, off: true })}
            </ToolBar>
        </SToolRow>
        <SToolRow>
            <ToolBar width={257}>
                {["dataSource", "newGeo", "newShape", "newSpatialite", "newMemory", "newMesh", "newVirtual"].map((n) => tool(n))}
            </ToolBar>
            <ToolBar width={503}>
                {tool("multiEdit", { corner: true, off: true })}
                {tool("pencil", off)}
                {tool("saveEdit", off)}
                {tool("addLine", { menu: true, off: true })}
                {tool("addPoints", off)}
                {tool("vertexTool", { menu: true, off: true })}
                {["attributes", "trash", "cut", "copy", "paste", "undo", "redo"].map((n) => tool(n, off))}
            </ToolBar>
            <ToolBar width={345}>
                {tool("label", off)}
                {tool("diagram", off)}
                <SSeparator />
                {tool("pinLabel")}
                {tool("redLabel")}
                <SSeparator />
                {["pinOff", "showLabel", "moveLabel", "rotateLabel", "editLabel"].map((n) => tool(n, off))}
            </ToolBar>
            <ToolBar width={0} />
            <ToolBar width={37}>{tool("python")}</ToolBar>
        </SToolRow>
        <SToolRow>
            <ToolBar width={489}>
                {tool("magnet")}
                {tool("snapAll", { corner: true, off: true })}
                {tool("snapPoints", { corner: true, off: true, pressed: true })}
                <Spin label="許容範囲" value="12" grey width={89} />
                <SComboBox>
                    <select aria-label="単位" defaultValue="px"><option>px</option></select>
                    <Arrow off />
                </SComboBox>
                {tool("topology")}
                {tool("avoid", { corner: true })}
                {tool("snapCross", off)}
                {tool("tracing", { menu: true, off: true })}
                {tool("digitize", off)}
            </ToolBar>
            <ToolBar width={0} />
            <ToolBar width={37}>{tool("help")}</ToolBar>
            <ToolBar width={311}>
                {tool("copyright")}
                {tool("target", off)}
                <SSeparator />
                {tool("targetMap", { corner: true })}
                {tool("targetAdd", off)}
                {tool("vertexAdd", off)}
                {tool("brushSel", off)}
                <SSeparator />
                {tool("info")}
                {tool("wrench")}
            </ToolBar>
        </SToolRow>
    </>
);

/* ---------- side panels ---------- */

const sources = [
    ["folder", "X:¥", "closed"],
    ["folder", "Y:¥ (Shared Folders)", "closed"],
    ["folder", "Z:¥ (Shared Folders)", "closed"],
    ["geopackage", "GeoPackage", "closed"],
    ["feather", "SpatiaLite"],
    ["elephant", "PostgreSQL"],
    ["hana", "SAP HANA"],
    ["mssql", "MS SQL Server"],
    ["oracle", "Oracle"],
    ["globe", "WMS/WMTS"],
    ["cube", "Scenes", "closed"],
    ["vectorTiles", "Vector Tiles", "closed"],
    ["tiles", "XYZ Tiles", "open"],
    ["tiles", "Mapzen Global Terrain", "child"],
    ["tiles", "OpenStreetMap", "child"],
    ["tiles", "地理院写真", "child"],
];

const Expander = ({ state }) => (
    <SExpander>
        {state === "closed" && <svg width="5" height="8"><path d="M0 0l5 4-5 4z" fill="#505050" /></svg>}
        {state === "open" && <Arrow />}
    </SExpander>
);

const PanelHeader = ({ title }) => (
    <SPanelHeader>
        <SPanelTitle>{title}</SPanelTitle>
        <SPanelButton aria-label={`${title} フロート`}>
            <svg width="8" height="8" fill="none" stroke="#666"><path d="M3.500.5h4v4h-4zM.5 3.500h4v4h-4z" /></svg>
        </SPanelButton>
        <SPanelButton aria-label={`${title} 閉じる`}>
            <svg width="8" height="8"><path d="M1 1l6 6M7 1L1 7" stroke="#555" strokeWidth="2" /></svg>
        </SPanelButton>
    </SPanelHeader>
);

const SmallTool = ({ name, corner }) => (
    <SSmallButton aria-label={name}>
        <Svg size={17}>{icons[name]}</Svg>
        {corner && <SCorner><Arrow small /></SCorner>}
    </SSmallButton>
);

const BrowserPanel = () => {
    const [selected, setSelected] = useState("OpenStreetMap");
    return (
        <SBrowserPanel>
            <PanelHeader title="ブラウザ" />
            <SPanelTools>
                {["addLayer", "refreshSmall", "funnel", "collapse", "info"].map((n) => <SmallTool key={n} name={n} />)}
            </SPanelTools>
            <STreeBox>
                <STree>
                    {sources.map(([icon, label, state]) => (
                        <STreeRow key={label} $child={state === "child"} $selected={label === selected} onClick={() => setSelected(label)}>
                            <Expander state={state} />
                            <Svg size={18}>{icons[icon]}</Svg>
                            <span>{label}</span>
                        </STreeRow>
                    ))}
                </STree>
                <SScrollBar>
                    <SScrollButton aria-label="上へ"><Arrow up /></SScrollButton>
                    <SScrollThumb />
                    <SScrollButton aria-label="下へ"><Arrow /></SScrollButton>
                </SScrollBar>
            </STreeBox>
        </SBrowserPanel>
    );
};

const LayerPanel = () => (
    <SLayerPanel>
        <PanelHeader title="レイヤ" />
        <SPanelTools>
            <SmallTool name="brush" />
            <SmallTool name="addGroup" />
            <SmallTool name="eye" corner />
            <SmallTool name="funnel" corner />
            <SmallTool name="expression" />
            <SSmallArrow aria-label="式フィルタ"><Arrow off /></SSmallArrow>
            <SmallTool name="expand" />
            <SmallTool name="collapse" />
            <SmallTool name="removeLayer" />
        </SPanelTools>
        <SLayerBox>
            <SLayerRow>
                <Arrow />
                <SCheck type="checkbox" id="layer-osm" defaultChecked />
                <Svg size={15}>{icons.raster}</Svg>
                <label htmlFor="layer-osm">OpenStreetMap</label>
            </SLayerRow>
        </SLayerBox>
    </SLayerPanel>
);

/* ---------- map ---------- */

const WorldMap = () => (
    <SMap viewBox="0 0 1032 1032" role="img" aria-label="OpenStreetMap">
        <defs>
            <filter id="coast" x="0" y="0" width="100%" height="100%">
                <feTurbulence type="fractalNoise" baseFrequency=".1" numOctaves="2" seed="4" />
                <feDisplacementMap in="SourceGraphic" scale="12" xChannelSelector="R" yChannelSelector="G" />
            </filter>
        </defs>
        <path d="M0 0h1032v1032H0z" fill="#aad3df" />
        <g filter="url(#coast)">
            <path d="M-10-10h1052v1052H-10z" fill="#aad3df" />
            {/* the Americas */}
            <g transform="translate(-18 -18)" fill="#f3f0ea" stroke="#f3f0ea" strokeWidth="2">
                <path d="M60 262L72 246 88 242 105 250 130 252 150 258 165 250 180 254 195 268 215 266 235 272 245 262 262 258 270 248 276 262 270 272 282 274 292 266 300 276 290 286 276 296 264 308 266 326 282 334 296 342 302 362 308 352 306 336 314 324 312 306 322 300 336 308 344 322 352 330 362 338 374 352 376 364 362 372 344 374 332 384 350 386 342 396 326 402 318 412 316 424 306 436 304 446 308 462 300 458 296 446 282 444 268 446 258 452 256 468 262 480 274 484 278 478 288 476 286 488 296 492 298 504 306 508 316 510 306 516 294 508 284 498 268 492 250 488 234 480 228 470 218 456 208 442 222 468 212 458 202 442 192 434 182 420 178 402 180 384 178 374 164 362 156 344 142 328 130 320 116 318 100 320 86 328 70 338 56 346 66 340 80 328 64 322 62 308 72 298 60 290 70 280z" />
                <path d="M330 150L345 132 360 112 385 98 400 85 395 78 415 66 440 60 465 66 475 76 465 84 485 94 500 108 490 118 484 140 486 160 478 176 482 196 472 212 478 230 464 240 470 252 450 264 430 280 420 296 410 318 400 316 390 302 384 280 380 264 390 250 378 236 386 222 376 214 372 196 362 184 345 182 330 174 340 160z" />
                <path d="M262 140L270 118 290 100 310 80 330 72 350 76 360 88 345 110 332 124 322 140 316 154 300 168 284 164 288 150 270 152z" />
                <path d="M278 222L290 216 304 226 320 230 332 244 346 262 354 278 352 298 356 306 340 304 324 296 318 288 330 282 322 268 310 258 300 248 284 244z" />
                <path d="M176 210L192 206 206 220 222 222 236 232 240 250 228 262 210 258 196 250 178 238zM182 190l14-14 14 6-4 20-20 0zM210 160l12 0 6 14-14 4zM214 184l10 0 0 14-8 0zM232 182l20-6 8 18-16 8-14-4zM262 174l14 0 4 12-14 4zM276 186l28 2 0 16-26 0zM240 220l14-4 2 22-10 2zM260 214l10 0 4 22-8 4zM234 148l12 4 2 12-12-4zM254 158l8 2-2 8zM262 244l14 0-2 8-12 0zM286 206l20 2-2 6-16 0z" />
                <path d="M466 284L478 278 490 280 496 286 490 294 480 298 472 294zM366 376l12-6 6 10-12 4zM18 262l12 8 14 12-2 10-14-8-10-12zM298 470l18 0 16 8-2 3-30-8zM330 480l12 2-2 4-10-2z" />
                <path d="M304 532L310 520 316 506 330 502 340 508 358 508 372 518 388 530 392 540 410 544 432 552 436 562 424 584 420 600 404 608 396 622 386 640 378 646 368 652 366 664 356 672 350 684 340 694 344 706 334 712 344 726 332 728 322 718 318 700 322 680 326 656 332 630 334 600 322 588 310 568 302 548z" />
                <path d="M360 710h10v3h-10zM360 772h10v3h-10z" />
                <path d="M178 280l16 4-4 6zM204 308l12-4 2 4-14 4zM246 350l8 10-4 2zM270 378l16 0 4 6-14 0zM284 386l6 14-5 2zM298 386l6 12-6-2zM232 324l8 6-4 2zM222 294l8 4-4 4z" fill="#aad3df" stroke="none" />
            </g>
            {/* Europe, Asia, Africa and Oceania */}
            <g transform="translate(462 -18)" fill="#f3f0ea" stroke="#f3f0ea" strokeWidth="2">
                <path d="M70 318L74 298 88 278 102 258 122 244 138 242 150 250 166 264 176 272 174 282 160 278 156 290 162 296 178 286 182 272 200 262 212 268 230 262 250 268 250 252 252 230 262 220 268 240 264 270 272 266 276 240 284 228 300 214 322 196 346 184 362 172 378 184 382 200 370 216 390 220 410 222 430 230 450 236 470 230 490 240 512 246 534 250 556 258 580 256 580 280 560 290 548 310 532 304 520 312 526 330 520 348 508 364 502 348 508 326 520 308 500 318 480 324 462 328 444 348 456 352 466 360 464 382 450 398 438 412 438 428 426 432 424 416 410 410 398 414 406 428 408 444 400 458 386 470 370 474 356 470 366 488 362 504 350 512 342 500 336 492 340 508 352 528 344 526 334 508 330 490 322 474 310 466 302 480 290 492 288 510 280 514 272 496 262 472 250 462 232 460 214 456 202 448 190 442 202 456 224 466 222 480 200 490 182 500 174 484 160 460 156 444 160 424 140 424 130 414 140 406 160 402 182 404 176 390 160 386 148 392 138 386 128 398 132 410 124 420 112 408 104 396 92 386 104 404 112 414 104 418 90 402 80 392 66 396 56 404 56 416 44 424 30 420 30 398 52 396 50 380 64 368 76 356 90 350 86 334 94 344 110 350 126 340 120 330 134 320 138 316 120 314 118 296 126 280 116 286 106 300 108 316 100 330 90 340 84 322z" />
                <path d="M36 432L50 424 74 420 84 424 86 434 104 440 116 436 136 440 154 442 160 462 170 484 180 504 204 502 196 520 178 540 168 556 170 580 160 592 156 608 144 628 128 640 110 640 104 620 92 596 96 570 88 556 82 538 86 528 74 518 58 516 36 520 20 512 8 496 8 476 18 456zM182 590L196 572 200 584 190 610 182 608z" />
                <path d="M382 604L400 596 412 582 430 580 434 572 448 574 446 586 460 594 464 572 474 590 484 604 494 620 492 640 480 656 464 656 450 644 440 636 420 636 400 642 386 640zM472 664h10l-2 10h-6zM566 648L558 664 550 656zM552 664L542 684 534 688 546 672z" />
                <path d="M438 540L458 542 478 550 488 566 470 560 456 556zM370 534L388 516 394 526 386 544 374 544zM332 516L346 526 360 544 356 552 344 538zM360 552L396 558 396 562 360 558zM398 530l12 0-6 8 4 8-8 2zM400 484L408 492 418 514 408 518 402 500zM284 510l6 2-2 7z" />
                <path d="M464 396L470 410 464 426 448 434 430 440 432 432 452 424 458 408zM458 392l12-6 4 8-12 6zM462 346l6 26-4 10z" />
                <path d="M206 234L214 210 232 190 250 180 254 186 236 196 226 212 220 230 230 248 214 242zM86 140L110 136 130 132 132 142 118 148 122 170 108 166 102 182 94 162zM188 122l12-2 6 6-14 2zM212 110l12 0 16 6 4 6-16 4-12-6zM318 124L330 114 340 130 348 150 356 162 344 158 328 146zM448 196l18-4 20 6-14 6-20-2zM458 214l12 0-2 6-10-2zM34 332L46 330 48 346 58 360 42 366 40 352zM26 352l10-4 2 12-12 2zM-2 108l20 0-4 14-8 14-8 0z" />
                <path d="M190 388l12-4 4 12-2 16-10 4 0-16zM142 386l16-6 16 8 0 4-30 0zM124 310l14 4-6 6-10-2zM368 352l-6 12-4 0zM148 536l6 0 0 8-6 0z" fill="#aad3df" stroke="none" />
            </g>
            <path d="M-20 886L46 889 70 874 107 856 153 846 199 834 245 837 282 822 315 816 318 788 337 761 358 755 343 782 352 819 361 846 386 871 413 886 438 862 462 828 482 818 512 804 562 804 622 798 652 782 672 774 702 786 737 798 752 782 792 772 862 778 902 774 952 786 992 808 1007 818 990 848 986 882 994 890 1007 882 1052 884V1052H-20z" fill="#f2efe9" />
        </g>
        <g transform="translate(-18 -18)" fill="none" stroke="#d5bcc6" strokeWidth="1.800">
            <path d="M131 252V320L160 346M178 374H268L284 380M204 440L216 440 232 442 244 458M276 486l4-10" stroke="#c0b4c4" />
            <path d="M316 506L330 520 344 530 352 518 374 520M344 530l-16 10 4 24 12 6 6 18 18 10 4 14 8 12-6 14M334 600l8 10-4 30-6 50M344 598l24 4M306 540l14 8" />
        </g>
        <g transform="translate(462 -18)" fill="none" stroke="#dbbfc9" strokeWidth="1.800">
            <path d="M90 316L100 290 112 264 130 252 140 250 142 290 138 310M130 252L150 262M66 366l18 14 18-6 22 6M90 350l14 22 22-4 0-18M126 368l12-22-12-18M126 368l40 0-18-16M102 380l14 10 10-12M108 392l14 6 2 14" />
            <path d="M190 376L206 362 230 362 240 348 270 350 298 374 330 366 350 376 390 370 410 356 424 360 440 372 452 388M306 374L320 390 360 400 400 386M206 396l20 6 30 8 30-14 18-20M216 420l20-20M226 450l10-22 26-4 20-18M262 424l14 20 40 10 26 0M326 470l-10-20M342 470l4-18 20 16M350 496l-6-24M184 410l10 14 4 20M160 424l22-16M160 444l14-14 24 14M182 484l30-14" />
            <path d="M18 464L38 466 38 490 10 496M38 466L66 444 66 424M66 444l34 22 0 28-30 8-10-6-22-4M100 466l0-30M100 468h56M128 442v26M100 494l22 14 24-8 10-30M28 500l0 18M46 500v16M62 500v16M74 516l14-16M88 528h30l6-20M118 528l30 0 10-24 24 8M118 528l14 30-36 10M132 558l24 6 12 0M96 570l10 0 6 40M112 586l24-2 10 16-8 20-20-4M132 558l4 26M148 530l6 34" />
        </g>
        <path d="M0 900h1032v132H0z" fill="#f2efe9" />
    </SMap>
);

/* ---------- status bar ---------- */

const StatusBar = () => (
    <SStatusBar>
        <SSearch>
            <svg width="15" height="15" fill="none" stroke="#777" strokeWidth="1.300"><circle cx="6" cy="6" r="5" /><path d="M9.500 9.500L14 14" /></svg>
            <input aria-label="検索" placeholder="検索 (Ctrl + K)" />
        </SSearch>
        <SStatusItem $gap={4}>
            <label htmlFor="coord">座標</label>
            <SField $width={120}><input id="coord" defaultValue="-73730244, 9947731" /></SField>
        </SStatusItem>
        <SPlainButton aria-label="範囲の切替">
            <svg width="18" height="18" fill="none" stroke="#222" strokeWidth="1.500"><path d="M2 5Q3 1 7 2L13 9Q16 12 13 15T7 14L2 8z" fill="#ddd" /><path d="M4 6l5-3M5 9l6-4M1 12l3 3M8 12h7M15 3l2-1M14 7l2-1" /><circle cx="11" cy="12.500" r="2" fill="#fff" /></svg>
        </SPlainButton>
        <SStatusItem $gap={4}>
            <label htmlFor="scale">縮尺</label>
            <SField $width={85} $tight>
                <input id="scale" defaultValue="491473536" />
                <SDropButton aria-label="縮尺一覧"><Arrow /></SDropButton>
            </SField>
        </SStatusItem>
        <SPlainButton aria-label="縮尺を固定">
            <svg width="14" height="18"><path d="M3.500 8V4.500Q3.500 1.500 7 1.500T10.500 4.500V8" fill="none" stroke="#999" strokeWidth="2" /><rect x=".5" y="7.500" width="13" height="9.500" rx="1.500" fill="#6f6f6f" /></svg>
        </SPlainButton>
        <SStatusItem $gap={4}>
            <label htmlFor="magnify">拡大</label>
            <Spin id="magnify" label="拡大" value="100%" width={90} />
        </SStatusItem>
        <SStatusItem $gap={10}>
            <label htmlFor="rotate">回転</label>
            <Spin id="rotate" label="回転" value="0.0 °" width={91} />
        </SStatusItem>
        <SRenderItem>
            <SCheck type="checkbox" id="render" defaultChecked />
            <label htmlFor="render">レンダ</label>
        </SRenderItem>
        <SCrsButton>
            <svg width="18" height="16" fill="none" stroke="#666" strokeWidth="1.200"><circle cx="9" cy="8" r="6.500" fill="#cfcfcf" /><ellipse cx="9" cy="8" rx="3" ry="6.500" /><path d="M0 8h18M3 4.500h12M3 11.500h12M9 1.500v13" /></svg>
            EPSG:3857
        </SCrsButton>
        <SPlainButton aria-label="メッセージ">
            <svg width="18" height="17"><path d="M9 1q8.500 0 8.500 6.500 0 3.500-2.500 5l1.500 4L11 14Q.5 15 .5 7.500.5 1 9 1z" fill="#636363" /><path d="M4 6.500h2v2H4zM8 6.500h2v2H8zM12 6.500h2v2h-2z" fill="#fff" /></svg>
        </SPlainButton>
    </SStatusBar>
);

export default function App() {
    return (
        <SWindow>
            <GlobalStyle />
            <TitleBar />
            <SMenuBar>
                {menus.map(([label, key, width]) => (
                    <SMenuButton key={label} $width={width}>{label}(<u>{key}</u>)</SMenuButton>
                ))}
            </SMenuBar>
            <ToolRows />
            <SMain>
                <SSide>
                    <BrowserPanel />
                    <SSplitter><SGrip /></SSplitter>
                    <LayerPanel />
                </SSide>
                <SCanvas><WorldMap /></SCanvas>
            </SMain>
            <StatusBar />
        </SWindow>
    );
}

const SWindow = styled.div`
    height: 100vh;
    display: flex;
    flex-direction: column;
`;

const STitleBar = styled.header`
    height: 25px;
    flex: none;
    display: flex;
    align-items: center;
    padding-right: 2px;
    background: #f3f3f3;
`;

const STitle = styled.h1`
    flex: 1;
    margin: 0 0 0 4px;
    font-family: "Noto Sans CJK JP", sans-serif;
    font-size: 12px;
    font-weight: 400;
    font-feature-settings: "palt";
`;

const SWindowButton = styled.button`
    width: 51px;
    height: 25px;
    padding: 0;
    border: 0;
    background: none;
`;

const SMenuBar = styled.nav`
    height: 18px;
    flex: none;
    display: flex;
    padding-left: 10px;
    border-bottom: 1px solid #d6d6d6;
`;

const SMenuButton = styled.button`
    width: ${({ $width }) => $width}px;
    padding: 0;
    border: 0;
    background: none;
    font-family: "Liberation Sans", "Noto Sans CJK JP", sans-serif;
    font-size: 11px;
    line-height: 16px;
    font-feature-settings: "palt";
    text-align: left;
    white-space: nowrap;
`;

const SToolRow = styled.div`
    height: 43px;
    flex: none;
    display: flex;
    background: linear-gradient(#fbfbfb, #efefef);
    border-bottom: 1px solid #b8b8b8;
`;

const SToolBar = styled.div`
    display: flex;
    padding-right: 5px;
`;

const SHandle = styled.div`
    width: 13px;
    display: flex;
    align-items: center;
    justify-content: center;
`;

const SDots = styled.div`
    width: 6px;
    height: 20px;
    background: radial-gradient(circle, #bdbdbd 1px, transparent 1px) 0 0 / 3px 3px;
`;

const STools = styled.div`
    width: ${({ $width }) => $width}px;
    display: flex;
    align-items: center;
`;

const SToolButton = styled.button`
    position: relative;
    flex: 11 1 0;
    min-width: 0;
    height: 35px;
    padding: 0;
    display: flex;
    align-items: center;
    justify-content: center;
    background: ${({ $pressed }) => ($pressed ? "#dcdcdc" : "none")};
    border: 1px solid ${({ $pressed }) => ($pressed ? "#a9a9a9" : "transparent")};
    border-radius: 3px;
    svg {
        flex: none;
    }
`;

const SMenuArrow = styled.button`
    flex: 4 1 0;
    min-width: 0;
    height: 35px;
    padding: 0 2px 0 0;
    border: 0;
    background: none;
    display: flex;
    align-items: center;
    justify-content: center;
    svg {
        flex: none;
    }
`;

const SCorner = styled.span`
    position: absolute;
    right: 1px;
    bottom: 3px;
    display: flex;
`;

const SSeparator = styled.div`
    flex: 2 1 0;
    height: 22px;
    background: linear-gradient(#d2d2d2, #d2d2d2) center / 1px 100% no-repeat;
`;

const SField = styled.div`
    width: ${({ $width }) => $width}px;
    height: 23px;
    flex: none;
    display: flex;
    background: ${({ $grey }) => ($grey ? "#f0f0f0" : "#fff")};
    color: ${({ $grey }) => ($grey ? "#8a8a8a" : "#111")};
    border: 1px solid #b3b3b3;
    border-radius: 2px;
    overflow: hidden;
    input {
        flex: 1;
        min-width: 0;
        padding: 0 0 0 ${({ $tight }) => ($tight ? 2 : 5)}px;
        border: 0;
        background: none;
        font-family: "Liberation Sans", sans-serif;
        font-size: 11px;
    }
`;

const SSpinButtons = styled.div`
    width: 16px;
    display: flex;
    flex-direction: column;
    border-left: 1px solid #bdbdbd;
    background: #f7f7f7;
    button {
        flex: 1;
        padding: 0;
        border: 0;
        background: none;
        display: flex;
        align-items: center;
        justify-content: center;
    }
`;

const SDropButton = styled.button`
    width: 23px;
    padding: 0;
    border: 0;
    border-left: 1px solid #d0d0d0;
    background: linear-gradient(#fdfdfd, #f0f0f0);
    display: flex;
    align-items: center;
    justify-content: center;
`;

const SComboBox = styled.div`
    width: 89px;
    height: 24px;
    flex: none;
    margin: 0 1px 0 2px;
    padding-right: 8px;
    display: flex;
    align-items: center;
    background: #f7f7f7;
    border: 1px solid #c2c2c2;
    border-radius: 2px;
    select {
        flex: 1;
        appearance: none;
        padding: 0 4px;
        border: 0;
        background: none;
        color: #8a8a8a;
        font-family: "Liberation Sans", sans-serif;
        font-size: 11px;
    }
`;

const SMain = styled.main`
    flex: 1;
    min-height: 0;
    display: flex;
    gap: 7px;
    border-top: 1px solid #d4d4d4;
`;

const SSide = styled.aside`
    width: 310px;
    flex: none;
    display: flex;
    flex-direction: column;
`;

const SBrowserPanel = styled.section`
    height: 365px;
    flex: none;
    display: flex;
    flex-direction: column;
`;

const SLayerPanel = styled.section`
    flex: 1;
    min-height: 0;
    display: flex;
    flex-direction: column;
`;

const SPanelHeader = styled.div`
    height: 21px;
    flex: none;
    display: flex;
    align-items: center;
    gap: 2px;
    padding: 0 1px 0 4px;
`;

const SPanelTitle = styled.h2`
    flex: 1;
    margin: 0;
    font-size: 11px;
    font-weight: 400;
    line-height: 16px;
    font-feature-settings: "palt";
`;

const SPanelButton = styled.button`
    width: 14px;
    height: 14px;
    padding: 0;
    display: flex;
    align-items: center;
    justify-content: center;
    background: #f2f2f2;
    border: 1px solid #808080;
    border-radius: 3px;
`;

const SPanelTools = styled.div`
    height: 34px;
    flex: none;
    display: flex;
    align-items: center;
    padding-left: 3px;
`;

const SSmallButton = styled.button`
    position: relative;
    width: 28px;
    height: 26px;
    padding: 0;
    border: 0;
    background: none;
    display: flex;
    align-items: center;
    justify-content: center;
`;

const SSmallArrow = styled.button`
    width: 12px;
    padding: 0;
    border: 0;
    background: none;
    display: flex;
    align-items: center;
    justify-content: center;
`;

const STreeBox = styled.div`
    flex: 1;
    min-height: 0;
    display: flex;
    background: #fff;
    border: 1px solid #c4c4c4;
    border-left: 0;
`;

const STree = styled.ul`
    flex: 1;
    margin: 0;
    padding: 1px 0 0;
    list-style: none;
    overflow: hidden;
`;

const STreeRow = styled.li`
    width: 250px;
    height: 20px;
    padding-left: ${({ $child }) => ($child ? 19 : 1)}px;
    display: flex;
    align-items: center;
    white-space: nowrap;
    background: ${({ $selected }) => ($selected ? "#0f7bd8" : "transparent")};
    color: ${({ $selected }) => ($selected ? "#fff" : "#111")};
    > svg {
        margin: 0 7px 0 4px;
    }
`;

const SExpander = styled.span`
    width: 16px;
    display: flex;
    justify-content: center;
`;

const SScrollBar = styled.div`
    width: 16px;
    display: flex;
    flex-direction: column;
    background: #e2e2e2;
    border-left: 1px solid #c8c8c8;
`;

const SScrollButton = styled.button`
    height: 15px;
    flex: none;
    padding: 0;
    border: 0;
    background: #f8f8f8;
    display: flex;
    align-items: center;
    justify-content: center;
    &:last-child {
        margin-top: auto;
    }
`;

const SScrollThumb = styled.div`
    height: 123px;
    margin-top: 41px;
    background: #fbfbfb;
    border: solid #c4c4c4;
    border-width: 1px 0;
`;

const SSplitter = styled.div`
    height: 8px;
    flex: none;
    display: flex;
    align-items: center;
    justify-content: center;
`;

const SGrip = styled.div`
    width: 18px;
    height: 3px;
    background: radial-gradient(circle, #b4b4b4 1px, transparent 1px) 0 0 / 3px 3px;
`;

const SLayerBox = styled.div`
    flex: 1;
    background: #fff;
    border: 1px solid #c4c4c4;
    border-left: 0;
`;

const SLayerRow = styled.div`
    height: 20px;
    padding-left: 8px;
    display: flex;
    align-items: center;
    gap: 8px;
    background: #f2f2f2;
    font-weight: 700;
    text-decoration: underline;
    input {
        margin-left: 2px;
    }
`;

const SCheck = styled.input`
    appearance: none;
    width: 15px;
    height: 15px;
    flex: none;
    display: flex;
    justify-content: center;
    background: #fff;
    border: 1px solid #b0b0b0;
    &:checked::after {
        content: "";
        width: 5px;
        height: 10px;
        border: solid #111;
        border-width: 0 2px 2px 0;
        transform: rotate(35deg);
    }
`;

const SCanvas = styled.div`
    flex: 1;
    display: grid;
    place-items: center;
    background: #fff;
    border: 1px solid #c8c8c8;
    border-top: 0;
`;

const SMap = styled.svg`
    width: 344px;
    height: 344px;
`;

const SStatusBar = styled.footer`
    height: 31px;
    flex: none;
    display: flex;
    align-items: center;
    padding: 0 8px 0 4px;
    font-size: 11px;
`;

const SSearch = styled.div`
    width: 222px;
    height: 24px;
    margin-right: auto;
    padding: 0 8px;
    display: flex;
    align-items: center;
    gap: 8px;
    background: #fff;
    border: 1px solid #a8a8a8;
    border-radius: 2px;
    input {
        flex: 1;
        min-width: 0;
        padding: 0;
        border: 0;
        background: none;
        font-family: "Liberation Sans", "Noto Sans CJK JP", sans-serif;
        font-size: 12px;
    }
    input::placeholder {
        color: #777;
    }
`;

const SStatusItem = styled.div`
    display: flex;
    align-items: center;
    gap: ${({ $gap }) => $gap}px;
    margin-left: 10px;
    label {
        min-width: 24px;
        font-size: 12px;
        font-feature-settings: "palt";
    }
`;

const SRenderItem = styled.div`
    display: flex;
    align-items: center;
    gap: 7px;
    margin-left: 7px;
    label {
        font-feature-settings: "palt";
    }
`;

const SPlainButton = styled.button`
    padding: 0;
    margin-left: 10px;
    border: 0;
    background: none;
    display: flex;
`;

const SCrsButton = styled.button`
    margin: 0 16px 0 15px;
    padding: 0;
    border: 0;
    background: none;
    display: flex;
    align-items: center;
    gap: 2px;
    font-family: "Liberation Sans", sans-serif;
    font-size: 11px;
`;
